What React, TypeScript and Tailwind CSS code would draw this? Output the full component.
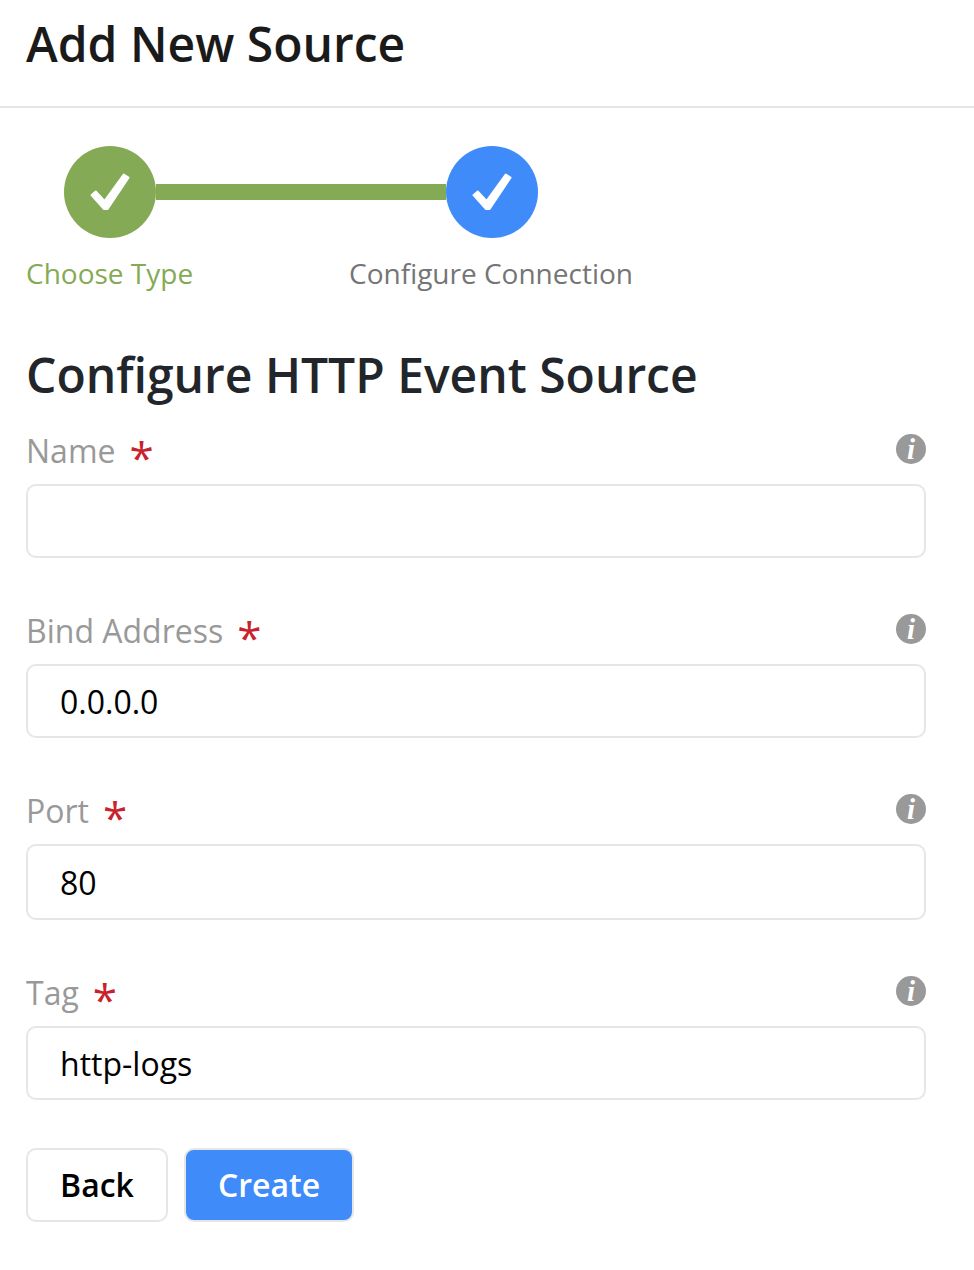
const fields = [
  { label: "Name", value: "", wrap: "pt-[19px]", input: "h-[74px]" },
  { label: "Bind Address", value: "0.0.0.0", wrap: "pt-[49px]", input: "h-[74px]" },
  { label: "Port", value: "80", wrap: "pt-[49px]", input: "h-[76px]" },
  { label: "Tag", value: "http-logs", wrap: "pt-[49px]", input: "h-[74px]" },
];

function Check() {
  return (
    <svg width="92" height="92" viewBox="0 0 92 92" fill="#fff">
      <path
        d="M27.5 49.2 L31.7 45.5 L40.5 55 L59.7 28.5 L64.5 31.6 L43.6 63 L40 63 Z"
        stroke="#fff"
        strokeWidth="2"
        strokeLinejoin="round"
      />
    </svg>
  );
}

function InfoIcon() {
  return (
    <div className="flex h-[30px] w-[30px] items-center justify-center rounded-full bg-[#999999] font-['Liberation_Serif',serif] text-[29px] font-bold italic leading-none text-white">
      i
    </div>
  );
}

export default function App() {
  return (
    <div className="min-h-[1270px] w-[974px] bg-white font-['Open_Sans',sans-serif]">
      <div className="h-[108px] border-b-2 border-[#e6e6e6] px-[26px] pt-[13px]">
        <h1 className="text-[48px] font-semibold leading-[62px] text-[#1a1a1a]">
          Add New Source
        </h1>
      </div>

      <div className="px-[26px]">
        <div className="flex pt-[38px] pl-[38px]">
          <div className="h-[92px] w-[92px] rounded-full bg-[#85aa55]">
            <Check />
          </div>
          <div className="mt-[38px] h-[16px] w-[290px] bg-[#85aa55]" />
          <div className="h-[92px] w-[92px] rounded-full bg-[#3e8bf9]">
            <Check />
          </div>
        </div>

        <div className="flex pt-[17px] text-[28px] leading-[36px]">
          <span className="w-[323px] text-[#85aa55]">Choose Type</span>
          <span className="text-[#757575]">Configure Connection</span>
        </div>

        <h2 className="pt-[51px] text-[48px] font-semibold leading-[66px] text-[#22262b]">
          Configure HTTP Event Source
        </h2>

        <form className="w-[900px]">
          {fields.map((f) => (
            <div key={f.label} className={f.wrap}>
              <div className="flex h-[57px] items-start justify-between pt-[2px]">
                <label className="flex text-[32px] leading-[44px] text-[#999999]">
                  {f.label}
                  <span className="ml-[14px] mt-[6px] text-[44px] leading-[44px] text-[#c8232c]">*</span>
                </label>
                <div className="pt-[5px]">
                  <InfoIcon />
                </div>
              </div>
              <input
                readOnly
                value={f.value}
                className={`block w-full rounded-[10px] border-2 border-[#e6e6e6] px-[32px] text-[32px] text-black outline-none ${f.input}`}
              />
            </div>
          ))}

          <div className="flex gap-[16px] pt-[48px]">
            <button
              type="button"
              className="h-[74px] w-[142px] rounded-[10px] border-2 border-[#e6e6e6] bg-white text-[32px] font-semibold text-black"
            >
              Back
            </button>
            <button
              type="button"
              className="h-[74px] w-[170px] rounded-[10px] border-2 border-[#e6e6e6] bg-[#3e8bf9] text-[32px] font-semibold text-white"
            >
              Create
            </button>
          </div>
        </form>
      </div>
    </div>
  );
}
